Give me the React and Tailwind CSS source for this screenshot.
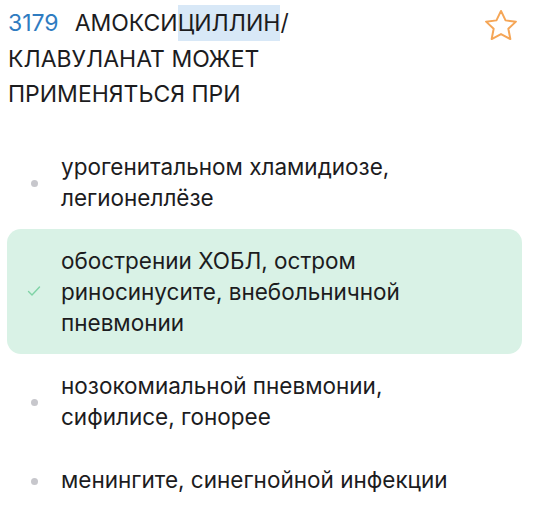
import React from 'react';

const options = [
  { id: 1, lines: ['урогенитальном хламидиозе,', 'легионеллёзе'], correct: false },
  { id: 2, lines: ['обострении ХОБЛ, остром', 'риносинусите, внебольничной', 'пневмонии'], correct: true },
  { id: 3, lines: ['нозокомиальной пневмонии,', 'сифилисе, гонорее'], correct: false },
  { id: 4, lines: ['менингите, синегнойной инфекции'], correct: false },
];

const StarIcon = () => (
  <svg width="40" height="35" viewBox="0 0 34 30" fill="none">
    <path
      d="M17 2.5 L20.9 10.6 L29.8 11.7 L23.3 17.8 L25 26.6 L17 22.3 L9 26.6 L10.7 17.8 L4.2 11.7 L13.1 10.6 Z"
      stroke="#f5a657"
      strokeWidth="1.7"
      strokeLinejoin="round"
    />
  </svg>
);

const CheckIcon = () => (
  <svg width="14" height="12" viewBox="0 0 14 12" fill="none">
    <path d="M1.5 6.5 L5 10 L12.5 2" stroke="#7fd3a6" strokeWidth="1.4" strokeLinecap="round" strokeLinejoin="round" />
  </svg>
);

export default function App() {
  return (
    <div className="w-[540px] h-[516px] bg-white overflow-hidden text-[#1c1c1e]" style={{ fontFamily: 'Inter, "Noto Sans", sans-serif' }}>
      {/* Question */}
      <div className="flex justify-between pl-2 pr-[19px] pt-[6px]">
        <h1 className="text-[23px] leading-[35.5px] font-normal">
          <span className="text-[#2f7cc1] mr-4">3179</span>
          АМОКСИ<span className="bg-[#d8e8f7] py-[4px]">ЦИЛЛИН</span>/
          <br />
          КЛАВУЛАНАТ МОЖЕТ
          <br />
          ПРИМЕНЯТЬСЯ ПРИ
        </h1>
        <div className="pt-[2px]">
          <StarIcon />
        </div>
      </div>

      {/* Answers */}
      <div className="mt-[22px] ml-[7px] mr-[18px]">
        {options.map((opt) => (
          <div
            key={opt.id}
            className={`flex items-center py-4 rounded-[14px] ${opt.correct ? 'bg-[#d9f2e6]' : ''}`}
          >
            <div className="w-[54px] flex justify-center shrink-0">
              {opt.correct ? (
                <CheckIcon />
              ) : (
                <span className="w-[7px] h-[7px] rounded-full bg-[#c7c7cc] mt-[4px]" />
              )}
            </div>
            <div className="text-[22.5px] leading-[31px]">
              {opt.lines.map((l, i) => (
                <div key={i}>{l}</div>
              ))}
            </div>
          </div>
        ))}
      </div>
    </div>
  );
}
